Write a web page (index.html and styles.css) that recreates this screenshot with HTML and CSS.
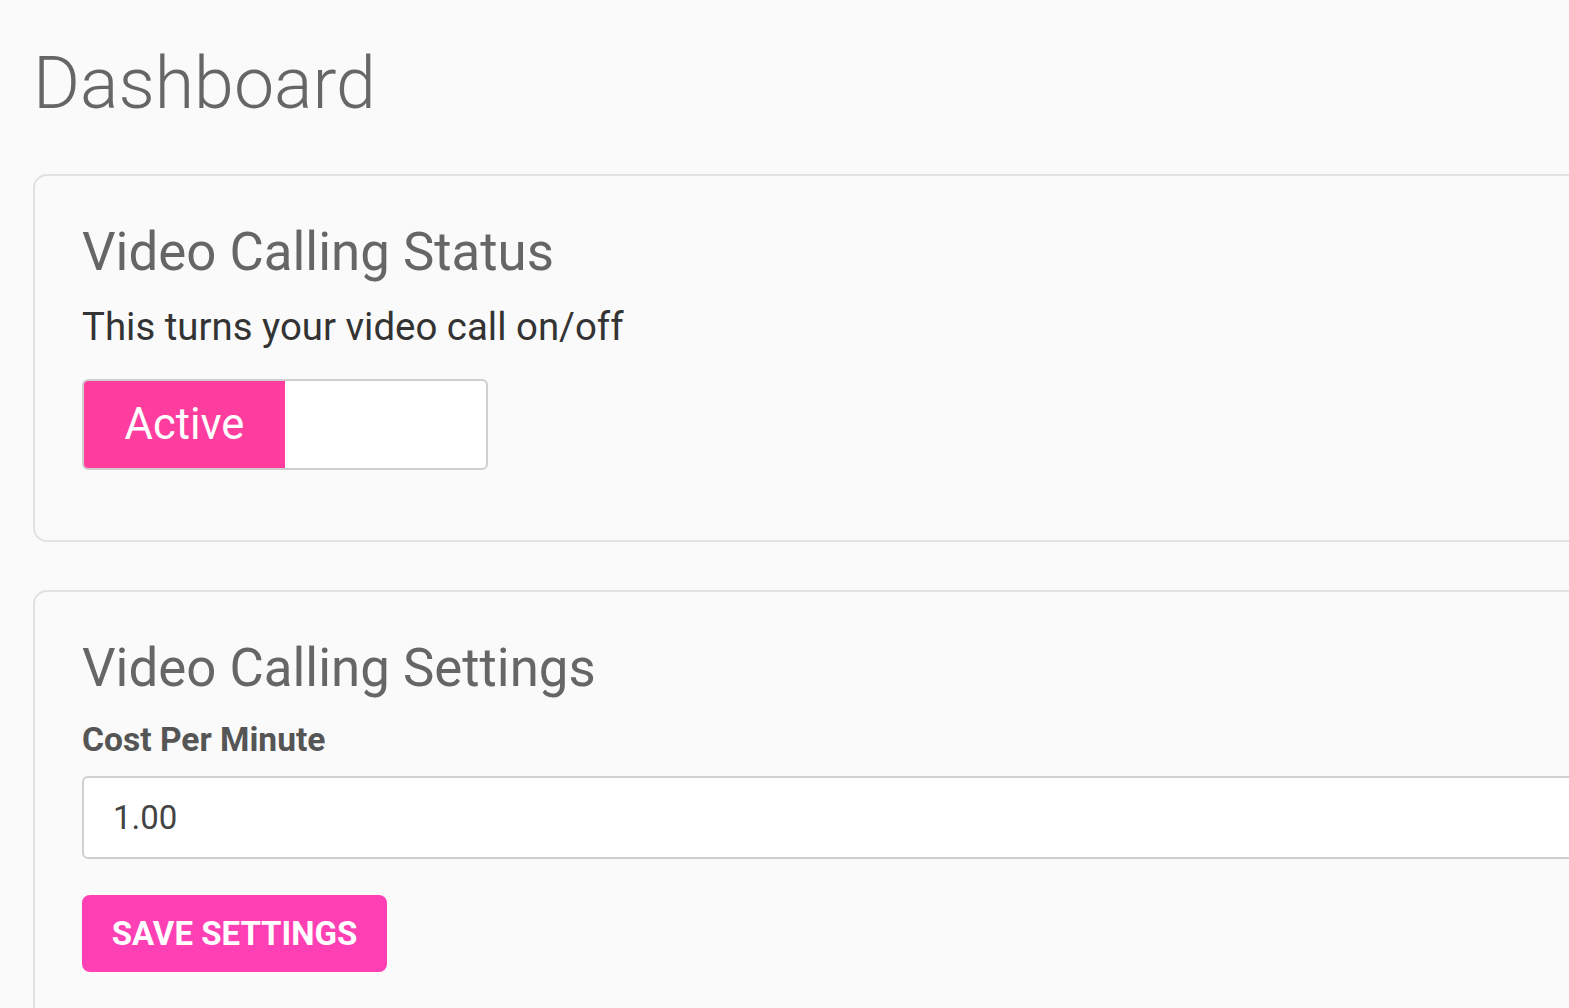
FILE: index.html
```html
<!DOCTYPE html>
<html lang="en">
<head>
<meta charset="utf-8">
<title>Dashboard</title>
<link rel="stylesheet" href="styles.css">
</head>
<body>
<main class="page">
  <h1 class="page-title">Dashboard</h1>
  <section class="card">
    <h2 class="card-title">Video Calling Status</h2>
    <p class="card-text">This turns your video call on/off</p>
    <div class="toggle">
      <span class="toggle-on">Active</span>
      <span class="toggle-off"></span>
    </div>
  </section>
  <section class="card card-settings">
    <h2 class="card-title">Video Calling Settings</h2>
    <label class="field-label" for="cpm">Cost Per Minute</label>
    <input class="field-input" id="cpm" type="text" value="1.00">
    <button class="btn-save" type="button">SAVE SETTINGS</button>
  </section>
</main>
</body>
</html>
```
FILE: styles.css
```css
html, body {
  margin: 0;
  padding: 0;
  background: #fafafa;
  overflow: hidden;
}
body {
  font-family: Roboto, "Liberation Sans", sans-serif;
  width: 1569px;
  height: 1008px;
}
.page {
  width: 1720px;
  padding: 42px 0 0 33px;
  display: flex;
  flex-direction: column;
}
.page-title {
  margin: 0 0 48px 0;
  font-size: 71.7px;
  line-height: 84px;
  font-weight: 300;
  color: #666;
}
.card {
  border: 2px solid #e2e2e2;
  border-radius: 14px;
  background: #fafafa;
  padding: 44px 47px 70px 47px;
  display: flex;
  flex-direction: column;
  align-items: flex-start;
}
.card + .card {
  margin-top: 48px;
}
.card-title {
  margin: 0;
  font-size: 52.8px;
  line-height: 64px;
  font-weight: 400;
  color: #666;
}
.card-text {
  margin: 20px 0 0 0;
  font-size: 38.4px;
  line-height: 46px;
  color: #333;
}
.toggle {
  margin-top: 29px;
  width: 402px;
  height: 87px;
  border: 2px solid #cfcfcf;
  border-radius: 6px;
  background: #fff;
  display: flex;
  overflow: hidden;
}
.toggle-on {
  width: 201px;
  background: #ff3d9e;
  color: #fff;
  font-size: 43.5px;
  display: flex;
  align-items: center;
  justify-content: center;
}
.toggle-off {
  flex: 1;
}
.field-label {
  margin-top: 20px;
  font-size: 33.6px;
  line-height: 40px;
  font-weight: 700;
  color: #555;
}
.field-input {
  margin-top: 16px;
  box-sizing: border-box;
  width: 100%;
  height: 83px;
  border: 2px solid #cfcfcf;
  border-radius: 6px;
  background: #fff;
  padding: 0 29px;
  font-family: Roboto, "Liberation Sans", sans-serif;
  font-size: 33px;
  color: #444;
  outline: none;
}
.btn-save {
  margin-top: 36px;
  width: 305px;
  height: 77px;
  border: 0;
  border-radius: 8px;
  background: #ff40b4;
  color: #fff;
  font-family: Roboto, "Liberation Sans", sans-serif;
  font-size: 33px;
  font-weight: 700;
  padding: 0;
}
```
